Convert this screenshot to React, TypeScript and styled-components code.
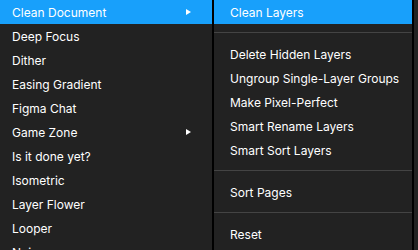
import React from "react";
import styled, { createGlobalStyle } from "styled-components";

const Global = createGlobalStyle`
  html, body { margin: 0; padding: 0; background: #222222; }
  body { width: 418px; height: 250px; overflow: hidden; font-family: Inter, "Noto Sans", sans-serif; }
`;

const Stage = styled.div`
  display: flex;
  align-items: flex-start;
  width: 418px;
  height: 250px;
  overflow: hidden;
  background: #222222;
`;

const Menu = styled.div`
  display: flex;
  flex-direction: column;
  width: 212px;
  flex: none;
  background: #222222;
`;

const SubMenu = styled.div`
  display: flex;
  flex-direction: column;
  width: 198px;
  flex: none;
  background: #222222;
  border-left: 2px solid #000;
  border-right: 2px solid #000;
  min-height: 260px;
`;

const Item = styled.div<{ $active?: boolean; $pad: number }>`
  display: flex;
  align-items: center;
  justify-content: space-between;
  height: 24px;
  padding: 0 21px 0 ${(p) => p.$pad}px;
  background: ${(p) => (p.$active ? "#18a0fb" : "transparent")};
  color: #ffffff;
  font-size: 12px;
  font-weight: 400;
  letter-spacing: 0;
  white-space: nowrap;
`;

const Arrow = styled.span`
  width: 0;
  height: 0;
  border-top: 3.5px solid transparent;
  border-bottom: 3.5px solid transparent;
  border-left: 5px solid #ffffff;
`;

const Separator = styled.div`
  height: 1px;
  margin: 8px 0 9px;
  background: #444444;
`;

const left: { label: string; sub?: boolean; active?: boolean }[] = [
  { label: "Clean Document", sub: true, active: true },
  { label: "Deep Focus" },
  { label: "Dither" },
  { label: "Easing Gradient" },
  { label: "Figma Chat" },
  { label: "Game Zone", sub: true },
  { label: "Is it done yet?" },
  { label: "Isometric" },
  { label: "Layer Flower" },
  { label: "Looper" },
  { label: "Noise" },
];

const right: (string | null)[] = [
  "Clean Layers",
  null,
  "Delete Hidden Layers",
  "Ungroup Single-Layer Groups",
  "Make Pixel-Perfect",
  "Smart Rename Layers",
  "Smart Sort Layers",
  null,
  "Sort Pages",
  null,
  "Reset",
];

export default function App() {
  return (
    <>
      <Global />
      <Stage>
        <Menu>
          {left.map((it) => (
            <Item key={it.label} $active={it.active} $pad={12}>
              <span>{it.label}</span>
              {it.sub && <Arrow />}
            </Item>
          ))}
        </Menu>
        <SubMenu>
          {right.map((label, i) =>
            label === null ? (
              <Separator key={i} />
            ) : (
              <Item key={i} $active={i === 0} $pad={16}>
                <span>{label}</span>
              </Item>
            )
          )}
        </SubMenu>
      </Stage>
    </>
  );
}
